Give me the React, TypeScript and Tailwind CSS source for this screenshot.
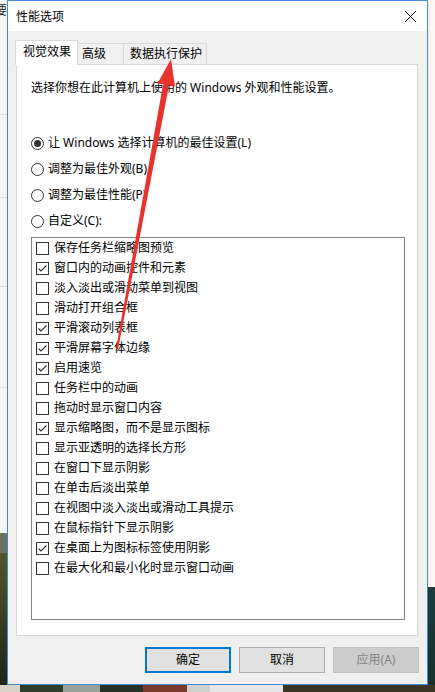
import { Fragment } from 'react'

const effects: [string, boolean][] = [
    ['保存任务栏缩略图预览', false],
    ['窗口内的动画控件和元素', true],
    ['淡入淡出或滑动菜单到视图', false],
    ['滑动打开组合框', false],
    ['平滑滚动列表框', true],
    ['平滑屏幕字体边缘', true],
    ['启用速览', true],
    ['任务栏中的动画', false],
    ['拖动时显示窗口内容', false],
    ['显示缩略图，而不是显示图标', true],
    ['显示亚透明的选择长方形', false],
    ['在窗口下显示阴影', false],
    ['在单击后淡出菜单', false],
    ['在视图中淡入淡出或滑动工具提示', false],
    ['在鼠标指针下显示阴影', false],
    ['在桌面上为图标标签使用阴影', true],
    ['在最大化和最小化时显示窗口动画', false],
]

const radios = [
    { label: '让 Windows 选择计算机的最佳设置(L)', on: true },
    { label: '调整为最佳外观(B)', on: false },
    { label: '调整为最佳性能(P)', on: false },
    { label: '自定义(C):', on: false },
]

function Radio({ on }: { on: boolean }) {
    return (
        <span className="w-[13px] h-[13px] rounded-full border border-[#333] bg-white flex items-center justify-center shrink-0">
            {on && <span className="w-[7px] h-[7px] rounded-full bg-[#333]"></span>}
        </span>
    )
}

function Check({ on }: { on: boolean }) {
    return (
        <span className="w-[13px] h-[13px] border border-[#333] bg-white flex items-center justify-center shrink-0">
            {on && (
                <svg width="11" height="11" viewBox="0 0 11 11">
                    <polyline points="1.5,5.5 4,8 9.5,2.5" fill="none" stroke="#333" strokeWidth="1.1" />
                </svg>
            )}
        </span>
    )
}

export default function App() {
    return (
        <div
            className="relative w-[435px] h-[692px] overflow-hidden flex flex-col bg-[#f4f4f4] text-[12px] text-black"
            style={{ fontFamily: '"Noto Sans", "Noto Sans CJK SC", sans-serif' }}
        >
            <div className="flex h-[685px]">
                {/* desktop peeking out on the left */}
                <div className="w-[7px] flex flex-col overflow-hidden">
                    <div className="h-[533px] bg-[#f5f5f5] flex flex-col">
                        <span className="-ml-[5px] mt-[2px] leading-[16px] text-[#222]" style={{ fontFamily: '"Noto Sans CJK SC", sans-serif' }}>要</span>
                        <div className="mt-[96px] h-px bg-[#dcdcdc]"></div>
                        <div className="mt-[82px] h-px bg-[#dcdcdc]"></div>
                        <div className="mt-[88px] h-px bg-[#dcdcdc]"></div>
                        <div className="mt-[100px] h-px bg-[#e2e2e2]"></div>
                    </div>
                    <div className="h-[20px] bg-[#6b7264]"></div>
                    <div className="flex-1 bg-gradient-to-b from-[#56562c] via-[#3a3d22] to-[#1f2418]"></div>
                </div>

                {/* dialog window */}
                <div className="w-[421px] border border-[#3f8bd8] flex flex-col bg-[#f0f0f0]">
                    <div className="h-[30px] bg-white flex items-center justify-between pl-[8px] pr-[10px]">
                        <span className="leading-[16px]" style={{ fontFamily: '"Noto Sans CJK SC", sans-serif' }}>性能选项</span>
                        <svg width="13" height="13" viewBox="0 0 13 13">
                            <path d="M1 1 L12 12 M12 1 L1 12" stroke="#111" strokeWidth="1" />
                        </svg>
                    </div>

                    <div className="flex-1 flex flex-col pl-[8px] pr-[8px] pt-[9px]">
                        {/* tabs */}
                        <div className="flex items-end h-[24px] -ml-px relative z-10">
                            <div className="w-[63px] h-[25px] -mb-px pl-[7px] bg-white border-l border-t border-r border-[#d9d9d9] flex items-center pb-[3px]">
                                视觉效果
                            </div>
                            <div className="w-[46px] h-[21px] pl-[4px] border-t border-r border-[#d9d9d9] flex items-center">
                                高级
                            </div>
                            <div className="w-[83px] h-[21px] pl-[6px] border-t border-r border-[#d9d9d9] flex items-center">
                                数据执行保护
                            </div>
                        </div>

                        {/* tab panel */}
                        <div className="w-[402px] h-[572px] bg-white border border-[#d9d9d9] pl-[14px] pt-[15px] flex flex-col">
                            <p className="leading-[16px]">选择你想在此计算机上使用的 Windows 外观和性能设置。</p>

                            <div className="mt-[34px] flex flex-col">
                                {radios.map((r) => (
                                    <div key={r.label} className="h-[26px] flex items-center gap-[4px]">
                                        <Radio on={r.on} />
                                        <span className="leading-[16px]">{r.label}</span>
                                    </div>
                                ))}
                            </div>

                            <div className="mt-[3px] w-[374px] h-[383px] border border-[#828282] bg-white flex flex-col">
                                {effects.map(([label, on]) => (
                                    <Fragment key={label}>
                                        <div className="h-[20px] flex items-center pl-[4px] gap-[5px]">
                                            <Check on={on} />
                                            <span className="leading-[16px]">{label}</span>
                                        </div>
                                    </Fragment>
                                ))}
                            </div>
                        </div>

                        {/* buttons */}
                        <div className="mt-[11px] flex justify-end gap-[8px]">
                            <button className="w-[86px] h-[26px] bg-[#e1e1e1] border-2 border-[#0078d7] leading-[16px]">确定</button>
                            <button className="w-[86px] h-[26px] bg-[#e1e1e1] border border-[#adadad] leading-[16px]">取消</button>
                            <button className="w-[86px] h-[26px] bg-[#cccccc] border border-[#bfbfbf] text-[#838383] leading-[16px]">应用(A)</button>
                        </div>
                    </div>
                </div>

                {/* desktop peeking out on the right */}
                <div className="w-[7px] flex flex-col">
                    <div className="h-[587px] bg-gradient-to-r from-[#fbeee6] to-[#fdfaf6]"></div>
                    <div className="flex-1 bg-gradient-to-b from-[#1d3a3c] to-[#16302a]"></div>
                </div>
            </div>

            {/* taskbar thumbnails under the window */}
            <div className="flex-1 flex">
                <div className="w-[20px] bg-[#d8d4c8]"></div>
                <div className="w-[43px] bg-[#2f3d2a]"></div>
                <div className="w-[37px] bg-[#9aa09a]"></div>
                <div className="w-[43px] bg-[#263024]"></div>
                <div className="w-[44px] bg-[#7a3a2c]"></div>
                <div className="w-[23px] bg-[#cfd2cc]"></div>
                <div className="w-[73px] bg-[#e6e6e6]"></div>
                <div className="flex-1 bg-[#3a3626]"></div>
            </div>

            {/* red annotation arrow */}
            <svg className="absolute left-0 top-0 pointer-events-none" width="435" height="692" viewBox="0 0 435 692">
                <polygon points="163,84.5 169,85.5 118,349.5 116,349" fill="#e8322e" />
                <polygon points="171,59 175,86.5 157.5,83.5" fill="#e8322e" />
            </svg>
        </div>
    )
}
